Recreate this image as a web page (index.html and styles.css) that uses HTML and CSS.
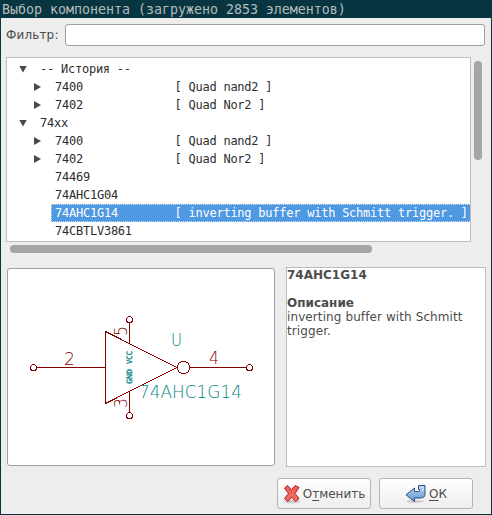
FILE: index.html
```html
<!DOCTYPE html>
<html lang="ru">
<head>
<meta charset="utf-8">
<title>Выбор компонента</title>
<link rel="stylesheet" href="styles.css">
</head>
<body>
<div class="window">
  <header class="titlebar">Выбор компонента (загружено 2853 элементов)</header>
  <main class="content">
    <div class="filter">
      <label for="filter">Фильтр:</label>
      <input id="filter" type="text">
    </div>
    <div class="tree-area">
      <div class="tree">
        <div class="row group open"><i class="arrow"></i><span class="name">-- История --</span></div>
        <div class="row"><i class="arrow"></i><span class="name">7400</span><span class="desc">[ Quad nand2 ]</span></div>
        <div class="row"><i class="arrow"></i><span class="name">7402</span><span class="desc">[ Quad Nor2 ]</span></div>
        <div class="row group open"><i class="arrow"></i><span class="name">74xx</span></div>
        <div class="row"><i class="arrow"></i><span class="name">7400</span><span class="desc">[ Quad nand2 ]</span></div>
        <div class="row"><i class="arrow"></i><span class="name">7402</span><span class="desc">[ Quad Nor2 ]</span></div>
        <div class="row leaf"><span class="name">74469</span></div>
        <div class="row leaf"><span class="name">74AHC1G04</span></div>
        <div class="row leaf selected"><span class="name">74AHC1G14</span><span class="desc">[ inverting buffer with Schmitt trigger. ]</span></div>
        <div class="row leaf"><span class="name">74CBTLV3861</span></div>
      </div>
      <div class="vscroll"></div>
      <div class="hscroll"></div>
    </div>
    <div class="details">
      <div class="preview">
        <svg width="266" height="196" viewBox="8 269 266 196">
          <g class="wire">
            <path d="M105.5 331.5V403.5L177 367.5ZM36 367.5H105M190 367.5H247M129.500 322V343M129.500 391V412"/>
            <circle cx="183.500" cy="367.500" r="6.200"/>
            <circle cx="33.500" cy="367.500" r="3"/>
            <circle cx="249.500" cy="367.500" r="3"/>
            <circle cx="129.500" cy="319.500" r="3"/>
            <circle cx="129.500" cy="415.500" r="3"/>
          </g>
          <g class="pin">
            <text x="64" y="365" textLength="11" lengthAdjust="spacingAndGlyphs">2</text>
            <text x="209" y="364" textLength="10" lengthAdjust="spacingAndGlyphs">4</text>
            <text transform="translate(127 336) rotate(-90)" textLength="10" lengthAdjust="spacingAndGlyphs">5</text>
            <text transform="translate(127 408) rotate(-90)" textLength="10" lengthAdjust="spacingAndGlyphs">3</text>
          </g>
          <g class="field">
            <text x="171" y="346" textLength="11" lengthAdjust="spacingAndGlyphs">U</text>
            <text x="139" y="398" textLength="103" lengthAdjust="spacingAndGlyphs">74AHC1G14</text>
          </g>
          <g class="power">
            <text transform="translate(132 384) rotate(-90)" textLength="15" lengthAdjust="spacingAndGlyphs">GND</text>
            <text transform="translate(132 364) rotate(-90)" textLength="13" lengthAdjust="spacingAndGlyphs">VCC</text>
          </g>
        </svg>
      </div>
      <div class="info"><b>74AHC1G14</b><br><br><b>Описание</b><br><span class="text">inverting buffer with Schmitt trigger.</span></div>
    </div>
    <div class="buttons">
      <button class="cancel">
        <svg width="18" height="20" viewBox="0 0 18 20"><defs><linearGradient id="r" x2="0" y2="1"><stop stop-color="#f45b55"/><stop offset="1" stop-color="#ef6f69"/></linearGradient></defs><ellipse cx="9" cy="17.500" rx="8" ry="1.800" fill="#ccc"/><path d="M4.500 1.500L8.500 6L12 1.500L16 3.500L12 9.500L16 14.500L12.500 17.500L8.500 13L5 17.500L1.500 14.500L5.500 9.500L1.500 4Z" fill="url(#r)" stroke="#b41920" stroke-linejoin="round"/></svg>
        <span>О<u>т</u>менить</span>
      </button>
      <button class="ok">
        <svg width="22" height="20" viewBox="0 0 22 20"><defs><linearGradient id="b" x2="0" y2="1"><stop stop-color="#b9d3ec"/><stop offset="1" stop-color="#6297cf"/></linearGradient></defs><ellipse cx="10" cy="17.500" rx="9" ry="1.500" fill="#ccc"/><path d="M13.500 1.500H20V10Q20 14 15.500 14H9.500V17.500L1 10.800L9.500 4V7.500H13.500Q15 7.500 14.500 5.500H13.500Z" fill="url(#b)" stroke="#294f83" stroke-linejoin="round"/><path d="M15 3H18V7" fill="none" stroke="#d9e8f6"/></svg>
        <span><u>О</u>К</span>
      </button>
    </div>
  </main>
</div>
</body>
</html>
```
FILE: styles.css
```css
* { box-sizing: border-box; }
body { margin: 0; }
.window {
  width: 492px;
  height: 515px;
  padding: 0 1px 1px;
  background: #073642;
  display: flex;
  flex-direction: column;
  font: 12px/14px "DejaVu Sans", sans-serif;
  color: #4c4c4c;
}
.titlebar {
  height: 18px;
  padding-left: 1px;
  font: 200 13.29px/19px "DejaVu Sans Mono", monospace;
  color: #b5babb;
  white-space: pre;
}
.content { flex: 1; background: #ededed; }
.filter {
  display: flex;
  align-items: center;
  height: 34px;
  padding: 0 6px 0 5px;
}
.filter label { width: 59px; letter-spacing: .15px; }
.filter input {
  flex: 1;
  height: 22px;
  border: 1px solid #a0a0a0;
  border-radius: 3px;
  background: #fff;
  padding: 0 4px;
}
.tree-area {
  display: grid;
  grid-template-columns: 465px 8px;
  grid-template-rows: 185px 8px;
  column-gap: 3px;
  row-gap: 3px;
  padding: 5px 0 0 5px;
}
.tree {
  border: 1px solid #bcbcbc;
  background: #fff;
  padding-top: 2px;
  overflow: hidden;
  font: 12px/18px "DejaVu Sans Mono", monospace;
  letter-spacing: -0.24px;
  color: #2d2d2d;
}
.row { display: flex; height: 18px; padding-left: 27px; white-space: nowrap; }
.row.group { padding-left: 12px; }
.row .name { width: 119.5px; flex: none; }
.row.leaf { padding-left: 48px; }
.arrow { width: 21px; display: flex; align-items: center; }
.arrow::before {
  content: "";
  width: 7px;
  height: 8px;
  background: #484848;
  clip-path: polygon(0 0, 100% 50%, 0 100%);
}
.open .arrow::before { width: 8px; height: 7px; clip-path: polygon(0 0, 100% 0, 50% 100%); }
.row.selected {
  margin-left: 44px;
  padding-left: 3px;
  border: 1px dotted #c8dff7;
  border-right: 0;
  line-height: 16px;
  background: #4f98e2;
  color: #fff;
}
.vscroll, .hscroll { background: #a5a5a5; border-radius: 4px; }
.vscroll { height: 99px; margin-top: 4px; }
.hscroll { width: 362px; height: 8px; margin-left: 4px; }
.details {
  display: flex;
  gap: 11px;
  padding: 15px 0 0 6px;
  height: 225px;
}
.preview {
  width: 268px;
  height: 198px;
  border: 1px solid #a0a0a0;
  border-radius: 3px;
  background: #fff;
}
.preview svg { display: block; }
.wire { fill: none; stroke: #840000; stroke-width: 1; shape-rendering: crispEdges; }
.pin text, .field text { font: 200 17.5px "DejaVu Sans", sans-serif; }
.pin { fill: #840000; }
.field { fill: #008484; }
.power text { font: 7.5px "DejaVu Sans Mono", monospace; fill: #008484; stroke: #008484; stroke-width: .3; }
.info {
  width: 200px;
  height: 200px;
  margin-top: -1px;
  border: 1px solid #bcbcbc;
  background: #fff;
}
.info .text { letter-spacing: .1px; }
.buttons { display: flex; gap: 8px; padding: 0 0 0 276px; }
button {
  width: 94px;
  height: 31px;
  padding: 0;
  display: flex;
  align-items: center;
  justify-content: center;
  gap: 2px;
  border: 1px solid #b5b5b5;
  border-radius: 3px;
  background: linear-gradient(#fff, #ededed);
  font: 12px/14px "DejaVu Sans", sans-serif;
  color: #4c4c4c;
}
button u { text-underline-offset: 2px; }
```
